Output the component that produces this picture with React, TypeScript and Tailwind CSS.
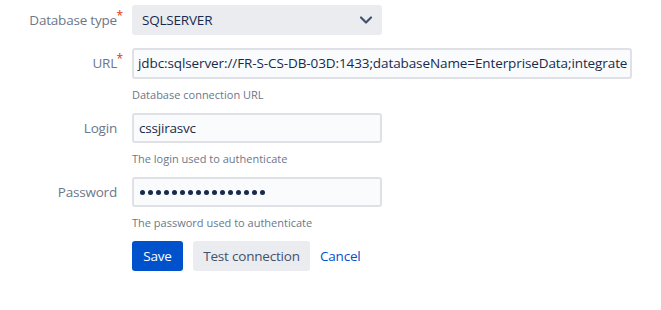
import { ChevronDown } from "lucide-react";

function Label({ text, required }: { text: string; required?: boolean }) {
  return (
    <div className="relative w-[117px] shrink-0 text-right text-[13.5px] tracking-[-0.2px] text-[#6b778c]">
      {text}
      {required && <span className="absolute -right-[6px] -top-[3px] text-[12px] text-[#de350b]">*</span>}
    </div>
  );
}

function Help({ text }: { text: string }) {
  return (
    <div className="ml-[132px] mt-[8px] h-[16px] text-[11px] leading-[16px] tracking-normal text-[#6b778c]">
      {text}
    </div>
  );
}

export default function App() {
  return (
    <div className="bg-white w-[661px] h-[310px] pt-[5px] font-['Open_Sans',sans-serif] text-[13.5px] tracking-[-0.2px] text-[#172b4d]">
      <div className="flex items-center gap-[15px]">
        <Label text="Database type" required />
        <div className="flex h-[30px] w-[250px] items-center justify-between rounded-[3px] bg-[#ebecf0] pl-[10px] pr-[6px]">
          <span>SQLSERVER</span>
          <ChevronDown size={20} strokeWidth={2.6} className="text-[#42526e]" />
        </div>
      </div>

      <div className="mt-[13px] flex items-center gap-[15px]">
        <Label text="URL" required />
        <div className="flex h-[31px] w-[500px] items-center overflow-hidden whitespace-nowrap rounded-[3px] border-2 border-[#dfe1e6] bg-[#fafbfc] px-[4px] tracking-[-0.1px]">
          jdbc:sqlserver://FR-S-CS-DB-03D:1433;databaseName=EnterpriseData;integrate
        </div>
      </div>
      <Help text="Database connection URL" />

      <div className="mt-[10px] flex items-center gap-[15px]">
        <Label text="Login" />
        <div className="flex h-[30px] w-[250px] items-center rounded-[3px] border-2 border-[#dfe1e6] bg-[#fafbfc] px-[5px]">
          cssjirasvc
        </div>
      </div>
      <Help text="The login used to authenticate" />

      <div className="mt-[10px] flex items-center gap-[15px]">
        <Label text="Password" />
        <div className="flex h-[30px] w-[250px] items-center gap-[3px] rounded-[3px] border-2 border-[#dfe1e6] bg-[#fafbfc] px-[6px]">
          {Array.from({ length: 16 }).map((_, i) => (
            <span key={i} className="h-[5px] w-[5px] rounded-full bg-[#172b4d]" />
          ))}
        </div>
      </div>
      <Help text="The password used to authenticate" />

      <div className="ml-[132px] mt-[10px] flex items-center gap-[10px]">
        <button className="h-[30px] w-[51px] rounded-[3px] bg-[#0052cc] text-white">Save</button>
        <button className="h-[30px] w-[117px] rounded-[3px] bg-[#ebecf0] text-[#42526e]">Test connection</button>
        <a className="text-[#0052cc]">Cancel</a>
      </div>
    </div>
  );
}
